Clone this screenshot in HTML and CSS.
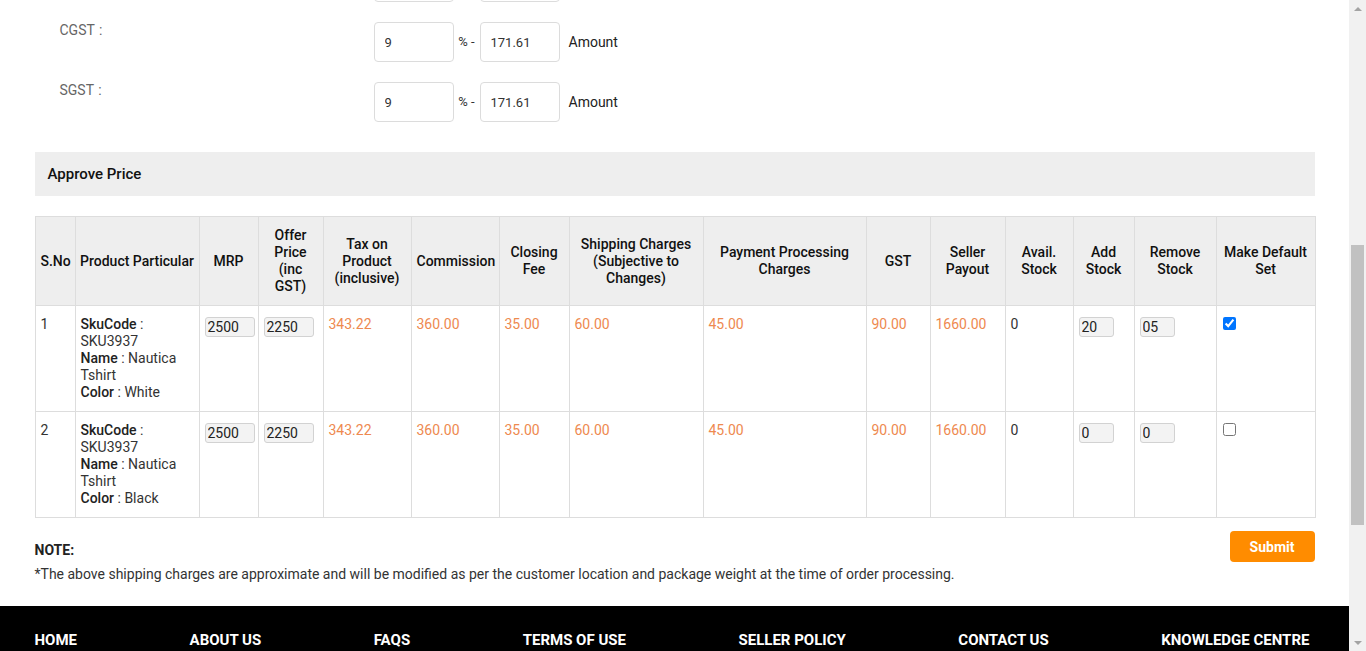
FILE: index.html
```html
<!DOCTYPE html>
<html lang="en">
<head>
<meta charset="utf-8">
<title>Approve Price</title>
<link rel="stylesheet" href="styles.css">
</head>
<body>
<header class="site-header">
  <div class="container header-inner">
    <span class="brand">Seller Panel</span>
    <span class="header-user">My Account</span>
  </div>
</header>

<main class="container">
  <h1 class="page-title">Edit Product Price</h1>

  <section class="tax-form">
    <div class="form-row">
      <label class="form-label">Product Name :</label>
      <input class="form-input wide" type="text" value="Nautica Tshirt">
    </div>
    <div class="form-row">
      <label class="form-label">SKU Code :</label>
      <input class="form-input wide" type="text" value="SKU3937">
    </div>
    <div class="form-row">
      <label class="form-label">MRP :</label>
      <input class="form-input" type="text" value="2500">
    </div>
    <div class="form-row">
      <label class="form-label">Offer Price :</label>
      <input class="form-input" type="text" value="2250">
    </div>
    <div class="form-row">
      <label class="form-label">HSN Code :</label>
      <input class="form-input" type="text" value="6109">
    </div>
    <div class="form-row">
      <label class="form-label">Weight (kg) :</label>
      <input class="form-input" type="text" value="0.5">
    </div>
    <div class="form-row">
      <label class="form-label">GST :</label>
      <input class="form-input" type="text" value="18">
      <span class="sep">% -</span>
      <input class="form-input" type="text" value="343.22">
      <span class="unit">Amount</span>
    </div>
    <div class="form-row" id="cgst-row">
      <label class="form-label">CGST :</label>
      <input class="form-input" type="text" value="9">
      <span class="sep">% -</span>
      <input class="form-input" type="text" value="171.61">
      <span class="unit">Amount</span>
    </div>
    <div class="form-row">
      <label class="form-label">SGST :</label>
      <input class="form-input" type="text" value="9">
      <span class="sep">% -</span>
      <input class="form-input" type="text" value="171.61">
      <span class="unit">Amount</span>
    </div>
  </section>

  <h2 class="section-head">Approve Price</h2>

  <table class="price-table">
    <colgroup>
      <col class="c-sno"><col class="c-part"><col class="c-mrp"><col class="c-offer"><col class="c-tax">
      <col class="c-comm"><col class="c-close"><col class="c-ship"><col class="c-pay"><col class="c-gst">
      <col class="c-payout"><col class="c-avail"><col class="c-add"><col class="c-remove"><col class="c-default">
    </colgroup>
    <thead>
      <tr>
        <th>S.No</th>
        <th class="nowrap">Product Particular</th>
        <th>MRP</th>
        <th>Offer Price (inc GST)</th>
        <th>Tax on Product (inclusive)</th>
        <th>Commission</th>
        <th>Closing Fee</th>
        <th>Shipping Charges (Subjective to Changes)</th>
        <th>Payment Processing Charges</th>
        <th>GST</th>
        <th>Seller Payout</th>
        <th>Avail. Stock</th>
        <th>Add Stock</th>
        <th>Remove Stock</th>
        <th>Make Default Set</th>
      </tr>
    </thead>
    <tbody>
      <tr>
        <td>1</td>
        <td><b>SkuCode</b> : SKU3937<br><b>Name</b> : Nautica Tshirt<br><b>Color</b> : White</td>
        <td><input class="cell-input" type="text" value="2500"></td>
        <td><input class="cell-input" type="text" value="2250"></td>
        <td class="amt">343.22</td>
        <td class="amt">360.00</td>
        <td class="amt">35.00</td>
        <td class="amt">60.00</td>
        <td class="amt">45.00</td>
        <td class="amt">90.00</td>
        <td class="amt">1660.00</td>
        <td>0</td>
        <td><input class="cell-input stock" type="text" value="20"></td>
        <td><input class="cell-input stock" type="text" value="05"></td>
        <td><input class="default-check" type="checkbox" checked></td>
      </tr>
      <tr>
        <td>2</td>
        <td><b>SkuCode</b> : SKU3937<br><b>Name</b> : Nautica Tshirt<br><b>Color</b> : Black</td>
        <td><input class="cell-input" type="text" value="2500"></td>
        <td><input class="cell-input" type="text" value="2250"></td>
        <td class="amt">343.22</td>
        <td class="amt">360.00</td>
        <td class="amt">35.00</td>
        <td class="amt">60.00</td>
        <td class="amt">45.00</td>
        <td class="amt">90.00</td>
        <td class="amt">1660.00</td>
        <td>0</td>
        <td><input class="cell-input stock" type="text" value="0"></td>
        <td><input class="cell-input stock" type="text" value="0"></td>
        <td><input class="default-check" type="checkbox"></td>
      </tr>
    </tbody>
  </table>

  <div class="note-bar">
    <div class="note">
      <p class="note-title">NOTE:</p>
      <p class="note-text">*The above shipping charges are approximate and will be modified as per the customer location and package weight at the time of order processing.</p>
    </div>
    <button class="submit-btn" type="button">Submit</button>
  </div>
</main>

<footer class="site-footer">
  <nav class="container footer-links">
    <a href="#">HOME</a>
    <a href="#">ABOUT US</a>
    <a href="#">FAQS</a>
    <a href="#">TERMS OF USE</a>
    <a href="#">SELLER POLICY</a>
    <a href="#">CONTACT US</a>
    <a href="#">KNOWLEDGE CENTRE</a>
  </nav>
  <div class="container footer-info">
    <p>Sell your products to millions of customers across the country.</p>
    <p>Email: support@example.com &nbsp;|&nbsp; Phone: 1800 000 0000</p>
  </div>
  <div class="container footer-copy">© 2019 Seller Panel. All rights reserved.</div>
</footer>

<div class="fake-scrollbar" aria-hidden="true">
  <span class="sb-arrow sb-up"></span>
  <span class="sb-track"><span class="sb-thumb"></span></span>
  <span class="sb-arrow sb-down"></span>
</div>

<script src="script.js"></script>
</body>
</html>
```

FILE: styles.css
```css
* { box-sizing: border-box; }

html { scroll-behavior: auto; }

body {
  margin: 0;
  padding-right: 17px;
  font-family: Roboto, "Noto Sans", "Liberation Sans", Arial, sans-serif;
  font-size: 14px;
  color: #333;
  background: #fff;
}

.container {
  width: 1280px;
  margin: 0 auto;
}

/* header (above the visible area) */
.site-header {
  height: 70px;
  border-bottom: 1px solid #eee;
}
.header-inner {
  height: 100%;
  display: flex;
  align-items: center;
  justify-content: space-between;
}
.brand { font-size: 20px; font-weight: 700; color: #ff8c00; }
.header-user { color: #333; }

.page-title {
  margin: 0;
  padding: 20px 0;
  font-size: 18px;
  line-height: 22px;
  font-weight: 500;
  color: #111;
}

/* tax form */
.tax-form { padding-bottom: 10px; }

.form-row {
  display: flex;
  align-items: flex-start;
  height: 40px;
  margin-bottom: 20px;
}
.form-label {
  width: 339px;
  flex: none;
  padding-left: 25px;
  padding-top: 0;
  font-size: 14px;
  line-height: 17px;
  color: #666;
  word-spacing: 1px;
}
.form-input {
  width: 80px;
  height: 40px;
  border: 1px solid #dcdcdc;
  border-radius: 4px;
  padding: 0 10px;
  font-family: Roboto, "Noto Sans", Arial, sans-serif;
  font-size: 13px;
  color: #333;
  background: #fff;
}
.form-input.wide { width: 240px; }
.sep {
  width: 26px;
  text-align: center;
  line-height: 40px;
  font-size: 13px;
  color: #333;
}
.unit {
  margin-left: 9px;
  line-height: 40px;
  font-size: 14px;
  color: #222;
}

/* section head */
.section-head {
  margin: 0 0 20px;
  height: 44px;
  padding: 0 13px;
  line-height: 44px;
  background: #eee;
  font-size: 15px;
  font-weight: 500;
  color: #111;
}

/* table */
.price-table {
  width: 1280px;
  table-layout: fixed;
  border-collapse: collapse;
  border: 1px solid #ddd;
}
.c-sno { width: 40px; }
.c-part { width: 124px; }
.c-mrp { width: 59px; }
.c-offer { width: 65px; }
.c-tax { width: 88px; }
.c-comm { width: 88px; }
.c-close { width: 70px; }
.c-ship { width: 134px; }
.c-pay { width: 163px; }
.c-gst { width: 64px; }
.c-payout { width: 75px; }
.c-avail { width: 68px; }
.c-add { width: 61px; }
.c-remove { width: 82px; }
.c-default { width: 99px; }

.price-table th,
.price-table td {
  border: 1px solid #ddd;
  padding: 10px 5px;
  line-height: 17px;
}
.price-table th {
  background: #eee;
  text-align: center;
  vertical-align: middle;
  font-weight: 500;
  color: #111;
}
.price-table th.nowrap { white-space: nowrap; padding-left: 4px; padding-right: 4px; }
.price-table td {
  vertical-align: top;
  text-align: left;
  color: #333;
}
.price-table td b { font-weight: 500; color: #222; }
.price-table td.amt { color: #ee894f; }

.cell-input {
  display: block;
  width: 50px;
  height: 20px;
  margin-top: 1px;
  padding: 0 2px;
  border: 1px solid #d2d2d2;
  border-radius: 3px;
  background: #f3f3f3;
  font-family: Roboto, "Noto Sans", Arial, sans-serif;
  font-size: 14px;
  color: #222;
}
.cell-input.stock { width: 35px; }

.default-check {
  display: block;
  width: 13px;
  height: 13px;
  margin: 1px 0 0 1px;
}

/* note + submit */
.note-bar {
  display: flex;
  justify-content: space-between;
  align-items: flex-start;
  padding-top: 14px;
}
.note p { margin: 0; }
.note-title {
  margin-top: 8px !important;
  font-weight: 700;
  font-size: 14px;
  line-height: 20px;
  color: #222;
}
.note-text {
  margin-top: 4px !important;
  font-size: 14px;
  line-height: 20px;
  color: #333;
}
.submit-btn {
  width: 85px;
  height: 31px;
  margin-top: -1px;
  border: 0;
  border-radius: 4px;
  background: #ff8c00;
  color: #fff;
  font-family: Roboto, "Noto Sans", Arial, sans-serif;
  font-size: 14px;
  font-weight: 700;
  cursor: pointer;
}

/* footer */
.site-footer {
  margin-top: 22px;
  background: #000;
  min-height: 298px;
  padding-top: 25px;
}
.footer-links {
  display: flex;
  justify-content: space-between;
  padding-right: 5px;
}
.footer-links a {
  color: #fff;
  text-decoration: none;
  font-size: 15px;
  font-weight: 700;
  line-height: 18px;
}
.footer-info {
  margin-top: 40px;
  color: #aaa;
  font-size: 13px;
}
.footer-info p { margin: 0 0 8px; }
.footer-copy {
  margin-top: 30px;
  padding: 20px 0;
  border-top: 1px solid #333;
  color: #888;
  font-size: 13px;
}

/* browser scrollbar drawn over the right edge */
.fake-scrollbar {
  position: fixed;
  top: 0;
  right: 0;
  width: 17px;
  height: 100vh;
  background: #f1f1f1;
  display: flex;
  flex-direction: column;
  z-index: 10;
}
.sb-arrow {
  flex: none;
  height: 17px;
  display: flex;
  align-items: center;
  justify-content: center;
}
.sb-arrow::before {
  content: "";
  width: 0;
  height: 0;
  border-left: 4px solid transparent;
  border-right: 4px solid transparent;
}
.sb-up::before { border-bottom: 4px solid #a3a3a3; }
.sb-down::before { border-top: 4px solid #a3a3a3; }
.sb-track {
  flex: 1;
  display: flex;
  flex-direction: column;
  padding: 0 2px;
}
.sb-thumb {
  margin-top: 228px;
  height: 280px;
  background: #c1c1c1;
}
```

FILE: script.js
```js
(function () {
  function place() {
    var row = document.getElementById('cgst-row');
    if (!row) return;
    var y = row.getBoundingClientRect().top + window.scrollY - 22;
    window.scrollTo(0, y);
  }
  place();
  window.addEventListener('load', place);
})();
```
